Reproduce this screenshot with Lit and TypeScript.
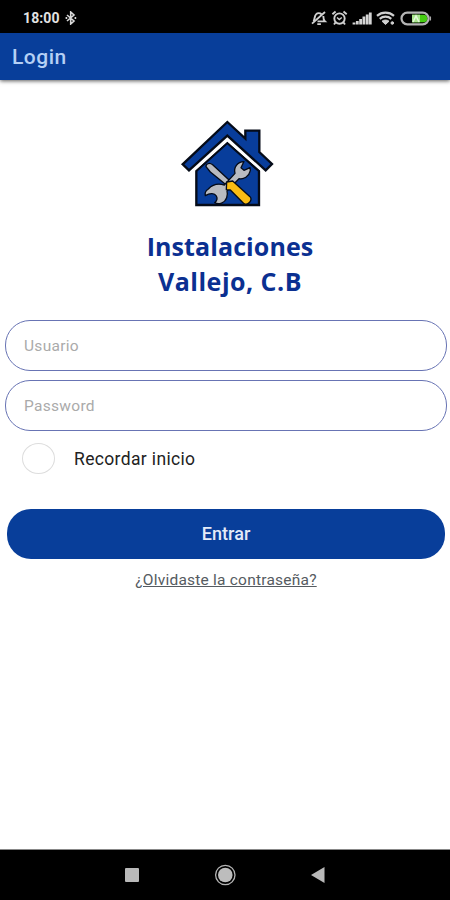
import { LitElement, html, css } from "lit";
import { customElement } from "lit/decorators.js";

@customElement("status-bar")
class StatusBar extends LitElement {
  static styles = css`
    :host {
      display: flex;
      align-items: center;
      justify-content: space-between;
      height: 33px;
      padding: 2px 17px 0 23px;
      box-sizing: border-box;
      background: #000;
      color: #e2e2e2;
    }
    .side { display: flex; align-items: center; }
    .time { font: 700 14px/18px Roboto, sans-serif; letter-spacing: 0.1px; margin-right: 5px; }
    svg { display: block; }
  `;
  render() {
    return html`
      <div class="side">
        <span class="time">18:00</span>
        <svg width="12" height="14" viewBox="0 0 12 14" fill="none" stroke="#d8d8d8" stroke-width="1.6">
          <path d="M2 4l7 6-3.300 3V1l3.300 3L2 10" />
          <path d="M.6 7h1.600M9.600 7h1.600" stroke-width="2" />
        </svg>
      </div>
      <svg width="122" height="18" viewBox="0 0 122 18" fill="none" stroke="#d0d0d0">
        <g stroke-width="1.900">
          <path d="M2.500 12.300c1.500-2 .7-5.500 2.700-7.200 1.300-1.200 3.800-1.200 5.300.2M12.300 7c0 2.300.1 3.900 1.700 5.400H6.500" />
          <path d="M1 14.600L14 3M6.300 15.100h3.600" />
        </g>
        <g stroke-width="1.900">
          <circle cx="28.500" cy="9.600" r="5.200" />
          <path d="M26 8.500l2.300 2 2.500-2" stroke-width="1.500" />
          <path d="M21.400 5.300l3.200-2.700M32.500 2.600l3.200 2.700M24.500 13.500l-1.500 2M32.500 13.500l1.500 2" />
        </g>
        <g stroke-width="2.800" stroke="#d4d4d4">
          <path d="M43 15.500v-2M46.300 15.500v-3.500M49.600 15.500v-5.500M52.900 15.500v-8M56.200 15.500v-10M59.300 15.500V3.500" />
        </g>
        <g stroke-width="2.200">
          <path d="M66 6.800c5-4.300 12-4.300 17 0M68.700 9.800c3.400-2.800 8.200-2.800 11.600 0" />
          <path d="M71 12.200c2-1.600 5-1.600 7 0l-3.500 3.300z" fill="#d0d0d0" stroke-width="1" />
          <circle cx="81.300" cy="14" r="1.300" stroke-width="1" fill="#d0d0d0" />
        </g>
        <rect x="90.500" y="3.700" width="27" height="11.600" rx="5.800" stroke="#b5b5b5" stroke-width="2.200" />
        <path d="M101 5.700h11.500a3.800 3.800 0 0 1 0 7.600H101z" fill="#45cc12" stroke="none" />
        <path d="M101 5.700h8v7.600h-8z" fill="#a9e68e" stroke="none" />
        <path d="M102 13l3-6 3 6" stroke="#e5f9dc" stroke-width="1.500" />
        <path d="M119.300 7.500v4" stroke="#aaa" stroke-width="1.500" />
      </svg>
    `;
  }
}

@customElement("brand-logo")
class BrandLogo extends LitElement {
  static styles = css`
    :host { display: block; }
    svg { display: block; width: 115px; height: 105px; }
  `;
  render() {
    return html`
      <svg viewBox="0 0 345 315" stroke="#050b18" stroke-linejoin="miter">
        <path d="M79 183L172 99l95 84v102H79z" fill="#083d9b" stroke-width="7" />
        <path d="M62 186L172 88l112 98" fill="none" stroke="#fff" stroke-width="10" />
        <path d="M172 36l54 50V62h42v64l38 36-19 19L172 77 57 181l-19-18z" fill="#083d9b" stroke-width="7" />
        <g stroke-width="4" fill="#b9bbc0" stroke-linejoin="round">
          <path d="M109 164q9-8 19 0l50 47-10 13-47-38-13-16z" />
          <path d="M222 155c-20 1-32 17-27 35l-32 35c-17-5-36-1-48 12-8 5-11 12-9 20 14-9 28-8 33 1 4 7 2 14-5 20 12 7 31 1 36-15 3-8 3-13 1-20l36-37c14 3 30-6 34-24l-1-9-18 8-9-8 8-17z" />
          <path d="M170 216l18-3 52 47c9 10-6 28-18 21l-41-41-12-1z" fill="#f9bc13" />
        </g>
      </svg>
    `;
  }
}

@customElement("nav-bar")
class NavBar extends LitElement {
  static styles = css`
    :host { display: block; height: 51px; box-sizing: border-box; background: #000; border-top: 1px solid #888; }
    .keys { display: grid; grid-template-columns: 14px 22px 14px; gap: 75px; justify-content: center; align-items: center; height: 50px; }
    .keys svg { display: block; }
  `;
  render() {
    return html`
      <div class="keys">
        <svg width="14" height="14" viewBox="0 0 14 14"><rect width="14" height="14" rx="1" fill="#b9b9b9" /></svg>
        <svg width="22" height="22" viewBox="0 0 22 22">
          <circle cx="11.300" cy="11" r="9.700" fill="none" stroke="#b4b4b4" stroke-width="1.300" />
          <circle cx="11.300" cy="11" r="7.300" fill="#bdbdbd" />
        </svg>
        <svg width="14" height="16" viewBox="0 0 14 16"><path d="M0 8L13.500 0v16z" fill="#b9b9b9" /></svg>
      </div>
    `;
  }
}

@customElement("app-root")
class AppRoot extends LitElement {
  static styles = css`
    :host {
      display: flex;
      flex-direction: column;
      height: 900px;
      overflow: hidden;
      background: #fff;
      font-family: Roboto, sans-serif;
    }
    .appbar {
      display: flex;
      align-items: center;
      height: 47px;
      padding-left: 12px;
      box-sizing: border-box;
      background: #083e9a;
      color: #b5d0f5;
      font-size: 21px;
      font-weight: 500;
      letter-spacing: 0.5px;
      box-shadow: 0 1px 4px rgba(0, 0, 0, 0.65);
    }
    main { flex: 1; display: flex; flex-direction: column; align-items: stretch; padding: 30px 3px 0 5px; }
    brand-logo { align-self: flex-start; margin-left: 165px; }
    h1 {
      margin: 14px 0 21px;
      padding-left: 8px;
      text-align: center;
      font: 700 25px/35px "Open Sans", "Noto Sans", sans-serif;
      letter-spacing: 0.1px;
      color: #0b3091;
    }
    .line2 { letter-spacing: 0.5px; }
    .field {
      display: block;
      width: 100%;
      height: 51px;
      box-sizing: border-box;
      margin: 0 0 9px;
      padding: 1px 18px 0;
      border: 1px solid #6874b4;
      border-radius: 25px;
      background: none;
      font: 400 15.5px Roboto, sans-serif;
      letter-spacing: 0.3px;
      outline: none;
    }
    .field::placeholder { color: #aaa; opacity: 1; }
    .remember { display: flex; align-items: center; gap: 19px; height: 31px; margin: 3px 0 0 17px; font-size: 17.500px; letter-spacing: 0.35px; color: #222; }
    .check { width: 33px; height: 31px; box-sizing: border-box; border: 1px solid #ddd; border-radius: 50%; }
    .enter {
      height: 50px;
      margin: 35px 2px 0;
      padding: 0 0 1px;
      border: 0;
      border-radius: 24px;
      background: #083e9a;
      color: #e4ebf8;
      font: 500 18px Roboto, sans-serif;
      letter-spacing: 0.05px;
    }
    .forgot { align-self: center; margin-top: 11px; font-size: 15.500px; line-height: 20px; letter-spacing: 0.22px; color: #555b61; text-decoration: underline; }
  `;
  render() {
    return html`
      <status-bar></status-bar>
      <header class="appbar">Login</header>
      <main>
        <brand-logo></brand-logo>
        <h1>Instalaciones<br /><span class="line2">Vallejo, C.B</span></h1>
        <input class="field" type="text" placeholder="Usuario" />
        <input class="field" type="password" placeholder="Password" />
        <label class="remember"><span class="check"></span>Recordar inicio</label>
        <button class="enter">Entrar</button>
        <a class="forgot">¿Olvidaste la contraseña?</a>
      </main>
      <nav-bar></nav-bar>
    `;
  }
}
